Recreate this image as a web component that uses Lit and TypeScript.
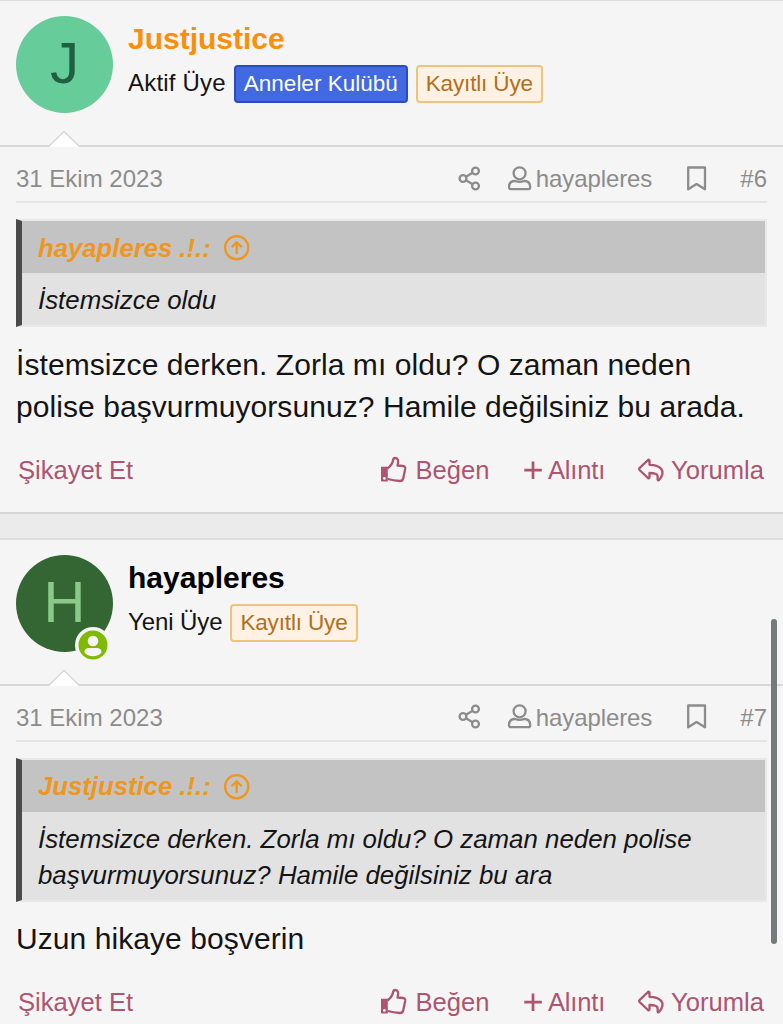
import { css, CSSResultGroup, html, LitElement, nothing, svg, SVGTemplateResult, TemplateResult } from "lit";
import { customElement, property } from "lit/decorators.js";
import { classMap } from "lit/directives/class-map.js";

interface Banner {
    text: string;
    kind: "club" | "member";
}

interface Post {
    author: string;
    staff: boolean;
    online: boolean;
    title: string;
    banners: Banner[];
    date: string;
    number: number;
    quoteAuthor: string;
    quote: string[];
    message: string[];
}

const POSTS: Post[] = [
    {
        author: "Justjustice",
        staff: true,
        online: false,
        title: "Aktif Üye",
        banners: [
            { text: "Anneler Kulübü", kind: "club" },
            { text: "Kayıtlı Üye", kind: "member" },
        ],
        date: "31 Ekim 2023",
        number: 6,
        quoteAuthor: "hayapleres",
        quote: ["İstemsizce oldu"],
        message: [
            "İstemsizce derken. Zorla mı oldu? O zaman neden",
            "polise başvurmuyorsunuz? Hamile değilsiniz bu arada.",
        ],
    },
    {
        author: "hayapleres",
        staff: false,
        online: true,
        title: "Yeni Üye",
        banners: [{ text: "Kayıtlı Üye", kind: "member" }],
        date: "31 Ekim 2023",
        number: 7,
        quoteAuthor: "Justjustice",
        quote: [
            "İstemsizce derken. Zorla mı oldu? O zaman neden polise",
            "başvurmuyorsunuz? Hamile değilsiniz bu ara",
        ],
        message: ["Uzun hikaye boşverin"],
    },
];

const ICONS: Record<string, SVGTemplateResult> = {
    share: svg`
        <circle cx="6" cy="12.500" r="3.400" />
        <circle cx="18.500" cy="5" r="3.400" />
        <circle cx="18.500" cy="20" r="3.400" />
        <path d="M9 10.700 15.600 6.700M9 14.300l6.600 4" />
    `,
    user: svg`
        <circle cx="13.600" cy="7.300" r="6" />
        <path d="M9.100 15c-4.300 0-6.100 2.600-6.100 6.200 0 1.300.6 2 2 2h17.200c1.400 0 2-.7 2-2 0-3.600-1.800-6.200-6.100-6.200-3 1.100-6 1.100-9 0z" />
    `,
    bookmark: svg`<path d="M5.200 1.500h16.800v21.800l-8.400-5.200-8.400 5.200z" />`,
    jump: svg`
        <circle cx="12.700" cy="12.700" r="11.600" />
        <path d="M12.700 18.900V7.500M7.600 12.300 12.700 7.200l5.100 5.100" />
    `,
    like: svg`
        <path class="solid" d="M0 9.800h6.800v14.700H1.200q-1.200 0-1.200-1.200z" />
        <circle class="dot" cx="3.400" cy="21.400" r="1.400" />
        <path d="M6.500 11.500C9 9.500 11.500 7 12 3.500c.2-1.600.9-2.500 2.200-2.500 2.800 0 3.800 2.500 2.300 7.500l5.500.5c1.700.2 2.500 1.300 2.200 2.900l-2 9.500c-.5 2-1.500 2.800-3.500 2.600-4-.2-8-.8-12-2" />
    `,
    quote: svg`<path class="thick" d="M13 4.500v17.500M4.300 13.200h17.500" />`,
    reply: svg`<path d="M10 3 1.500 11.200c-.6.600-.6 1.200 0 1.800L10 21c.6.500 1.500.2 1.500-.7V16c4.500 0 8.500.5 8.200 4.200 0 1.200-.5 2.300.2 3 .6.400 1.200 0 1.800-.8 6.200-8.500 1.500-14.400-10.200-14.600V3.700c0-.9-.9-1.200-1.500-.7z" />`,
};

@customElement("forum-icon")
export class ForumIcon extends LitElement {
    @property() public name: string = "";

    protected render(): TemplateResult {
        return html`<svg viewBox="0 0 26 26">${ICONS[this.name]}</svg>`;
    }

    static get styles(): CSSResultGroup {
        return css`
            :host {
                display: block;
                flex: none;
                height: 26px;
                width: 26px;
            }
            svg {
                display: block;
                fill: none;
                height: 100%;
                overflow: visible;
                stroke: currentColor;
                stroke-linejoin: round;
                stroke-width: 2.3px;
                width: 100%;
            }
            .solid {
                fill: currentColor;
                stroke: none;
            }
            .dot {
                fill: #f5f5f5;
                stroke: none;
            }
            .thick {
                stroke-width: 2.7px;
            }
        `;
    }
}

@customElement("forum-post")
export class ForumPost extends LitElement {
    @property({ attribute: false }) public post!: Post;

    protected render(): TemplateResult {
        const post = this.post;
        return html`
            <header class="user">
                <div class=${classMap({ avatar: true, staff: post.staff })}>
                    <span class="initial">${post.author[0].toUpperCase()}</span>
                    ${post.online ? this.renderOnline() : nothing}
                </div>
                <div class="user-info">
                    <div class=${classMap({ name: true, staff: post.staff })}>${post.author}</div>
                    <div class="titles">
                        <span class=${classMap({ title: true, staff: post.staff })}>${post.title}</span>
                        ${post.banners.map(
                            (banner) => html`<span class="banner ${banner.kind}">${banner.text}</span>`
                        )}
                    </div>
                </div>
                <svg class="arrow" viewBox="0 0 32 17">
                    <path class="arrow-fill" d="M1 17 16 1.500 31 17z" />
                    <path class="arrow-line" d="M1 16 16 1.500 31 16" />
                </svg>
            </header>
            <div class="meta">
                <span class="date">${post.date}</span>
                <forum-icon class="share" name="share"></forum-icon>
                <forum-icon class="starter-icon" name="user"></forum-icon>
                <span class="starter">hayapleres</span>
                <forum-icon class="bookmark" name="bookmark"></forum-icon>
                <span class="number">#${post.number}</span>
            </div>
            <blockquote class="quote">
                <div class="quote-title">
                    <span>${post.quoteAuthor} .!.:</span>
                    <forum-icon name="jump"></forum-icon>
                </div>
                <div class="quote-content">${post.quote.map((line) => html`<div>${line}</div>`)}</div>
            </blockquote>
            <div class="message">${post.message.map((line) => html`<div>${line}</div>`)}</div>
            <footer class="actions">
                <a class="report">Şikayet Et</a>
                <a class="action like"><forum-icon name="like"></forum-icon><span>Beğen</span></a>
                <a class="action plus"><forum-icon name="quote"></forum-icon><span>Alıntı</span></a>
                <a class="action reply"><forum-icon name="reply"></forum-icon><span>Yorumla</span></a>
            </footer>
        `;
    }

    private renderOnline(): TemplateResult {
        return html`
            <svg class="online" viewBox="0 0 36 36">
                <circle class="ring" cx="18" cy="18" r="18" />
                <circle class="disc" cx="18" cy="18" r="14.500" />
                <circle class="ring" cx="18" cy="14" r="5.300" />
                <path class="ring" d="M9.500 25.500c0-5 4-4.500 8.500-4.500s8.500-.5 8.500 4.500c-2 2.600-5 3.700-8.500 3.700s-6.500-1.100-8.500-3.700z" />
            </svg>
        `;
    }

    static get styles(): CSSResultGroup {
        return css`
            :host {
                background-color: #f5f5f5;
                border-bottom: 2px solid #d5d5d5;
                border-top: 2px solid #dedede;
                display: block;
            }
            .user {
                border-bottom: 2px solid #d8d8d8;
                box-sizing: border-box;
                display: flex;
                gap: 15px;
                height: 146px;
                padding: 15px 16px;
                position: relative;
            }
            .avatar {
                background-color: #336633;
                border-radius: 50%;
                color: #8bc98b;
                display: flex;
                font-size: 58px;
                height: 97px;
                justify-content: center;
                position: relative;
                width: 97px;
            }
            .avatar.staff {
                background-color: #66cc99;
                color: #1f6042;
            }
            .initial {
                line-height: 93px;
            }
            .online {
                height: 36px;
                left: 59px;
                position: absolute;
                top: 72px;
                width: 36px;
            }
            .ring {
                fill: #f5f5f5;
            }
            .disc {
                fill: #7fb900;
            }
            .user-info {
                padding-top: 2px;
            }
            .name {
                color: #000;
                font-size: 30px;
                font-weight: bold;
                line-height: 42px;
            }
            .name.staff {
                color: #f98f0a;
            }
            .titles {
                align-items: center;
                display: flex;
                gap: 8px;
                height: 48px;
            }
            .title {
                font-size: 24px;
                letter-spacing: -0.1px;
                padding-bottom: 2px;
            }
            .title.staff {
                letter-spacing: 0.2px;
            }
            .banner {
                border: 2px solid;
                border-radius: 4px;
                box-sizing: border-box;
                font-size: 22.5px;
                height: 38px;
                line-height: 34px;
                padding: 0 8px;
            }
            .banner.club {
                background-color: #4169e1;
                border-color: #2a4cc0;
                color: #fff;
            }
            .banner.member {
                background-color: #fff1e3;
                border-color: #eec47c;
                color: #b0701a;
                letter-spacing: -0.15px;
            }
            .arrow {
                bottom: -2px;
                height: 17px;
                left: 48px;
                position: absolute;
                width: 32px;
            }
            .arrow-fill {
                fill: #fff;
            }
            .arrow-line {
                fill: none;
                stroke: #d8d8d8;
                stroke-width: 1.5px;
            }
            .meta {
                align-items: center;
                border-bottom: 2px solid #e5e5e5;
                color: #8c8c8c;
                display: flex;
                font-size: 24px;
                height: 54px;
                margin: 0 16px;
            }
            .meta span {
                padding-top: 10px;
            }
            .meta forum-icon {
                margin-top: 9px;
            }
            .date {
                flex: 1;
            }
            .meta .starter {
                letter-spacing: -0.1px;
            }
            .share {
                margin-right: 23px;
            }
            .starter-icon {
                margin-right: 4px;
            }
            .bookmark {
                margin: 0 31px;
            }
            .quote {
                background-color: #e2e2e2;
                border: 2px solid #e8e8e8;
                border-left: 6px solid #4a4a4a;
                font-style: italic;
                margin: 16px 16px 0;
            }
            .quote-title {
                align-items: center;
                background-color: #c3c3c3;
                box-sizing: border-box;
                color: #ee961d;
                display: flex;
                font-size: 25.7px;
                font-weight: bold;
                gap: 13px;
                height: 52px;
                padding: 2px 16px 0;
            }
            .quote-content {
                font-size: 25.85px;
                line-height: 36px;
                padding: 9px 16px 7px;
                white-space: nowrap;
            }
            .message {
                font-size: 30px;
                letter-spacing: 0.07px;
                line-height: 42px;
                margin: 16.6px 16px 0;
                white-space: nowrap;
            }
            .actions {
                color: #ad5570;
                display: flex;
                font-size: 25.6px;
                height: 84px;
                line-height: 84px;
                padding: 0 19px 0 18px;
            }
            .report {
                flex: 1;
            }
            .action {
                align-items: center;
                display: flex;
                gap: 7px;
            }
            .like {
                gap: 8px;
            }
            .plus {
                gap: 2px;
                letter-spacing: -0.2px;
                margin: 0 33px 0 30.5px;
            }
        `;
    }
}

@customElement("app-root")
export class AppRoot extends LitElement {
    protected render(): TemplateResult {
        return html`
            <main class="thread">${POSTS.map((post) => html`<forum-post .post=${post}></forum-post>`)}</main>
            <div class="scroll-thumb"></div>
        `;
    }

    static get styles(): CSSResultGroup {
        return css`
            :host {
                background-color: #ebebeb;
                color: #141414;
                display: block;
                font-family: "Liberation Sans", Arial, sans-serif;
                height: 100vh;
                overflow: hidden;
                position: relative;
            }
            .thread {
                display: flex;
                flex-direction: column;
                gap: 24px;
            }
            forum-post:first-of-type {
                border-top-width: 1px;
            }
            .scroll-thumb {
                background-color: #777a7a;
                border-radius: 3px;
                height: 325px;
                position: absolute;
                right: 6px;
                top: 619px;
                width: 6px;
            }
        `;
    }
}
